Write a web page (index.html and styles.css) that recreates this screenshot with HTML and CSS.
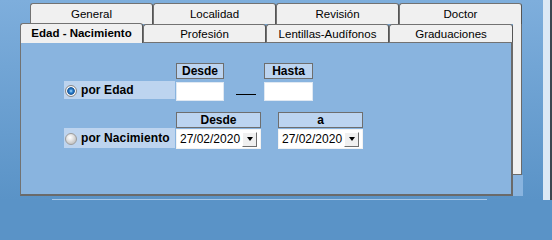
FILE: index.html
```html
<!DOCTYPE html>
<html>
<head>
<meta charset="utf-8">
<link rel="stylesheet" href="styles.css">
</head>
<body>
<div class="screen">
  <div class="ctl">
    <div class="row-back">
      <div class="tab back">General</div>
      <div class="tab back">Localidad</div>
      <div class="tab back">Revisión</div>
      <div class="tab back last">Doctor</div>
    </div>
    <div class="ctl-body">
      <div class="main">
        <div class="row-front">
          <div class="tab front sel">Edad - Nacimiento</div>
          <div class="tab front">Profesión</div>
          <div class="tab front">Lentillas-Audífonos</div>
          <div class="tab front last">Graduaciones</div>
        </div>
        <div class="panel">
          <div class="sec">
            <div class="heads">
              <div class="head w48">Desde</div>
              <div class="head w49 gap40">Hasta</div>
            </div>
            <div class="fields">
              <div class="opt h18"><span class="radio on"></span><span class="opt-text">por Edad</span></div>
              <div class="input w48"></div>
              <div class="dash"></div>
              <div class="input w49"></div>
            </div>
          </div>
          <div class="sec sec2">
            <div class="heads">
              <div class="head w85">Desde</div>
              <div class="head w85 gap17">a</div>
            </div>
            <div class="fields">
              <div class="opt h20"><span class="radio"></span><span class="opt-text">por Nacimiento</span></div>
              <div class="combo"><span class="combo-text">27/02/2020</span><span class="drop"><span class="tri"></span></span></div>
              <div class="combo gap17"><span class="combo-text">27/02/2020</span><span class="drop"><span class="tri"></span></span></div>
            </div>
          </div>
        </div>
      </div>
      <div class="edge">
        <div class="edge-gray"></div>
        <div class="edge-blue"></div>
      </div>
    </div>
    <div class="footbar"></div>
  </div>
  <div class="winedge"></div>
  <div class="winline"></div>
</div>
</body>
</html>
```
FILE: styles.css
```css
html {
  background: #5a93c7;
}
html, body {
  margin: 0;
  padding: 0;
}
body {
  width: 552px;
  height: 200px;
  overflow: hidden;
  font-family: "Liberation Sans", Arial, sans-serif;
  color: #000;
}
.screen {
  display: flex;
  width: 552px;
  height: 200px;
  background: linear-gradient(#7eaedc, #5a93c7);
}
.ctl {
  margin-left: 20px;
  width: 503px;
  padding-top: 3px;
  display: flex;
  flex-direction: column;
}
.row-back {
  display: flex;
  margin-left: 10px;
}
.tab {
  box-sizing: border-box;
  width: 123px;
  background: #f0f0f0;
  border: 1px solid #727272;
  border-right-color: #555;
  border-bottom: none;
  border-radius: 3px 3px 0 0;
  font-size: 11.5px;
  display: flex;
  align-items: center;
  justify-content: center;
  white-space: nowrap;
}
.back {
  height: 21px;
  padding-bottom: 1px;
}
.ctl-body {
  display: flex;
}
.main {
  width: 493px;
  display: flex;
  flex-direction: column;
}
.row-front {
  display: flex;
  align-items: flex-start;
}
.front {
  height: 19px;
  border-bottom: 1px solid #727272;
}
.front.last {
  width: 124px;
}
.front.sel {
  margin-top: -1px;
  height: 20px;
  border-bottom: none;
  font-weight: bold;
  font-size: 11.5px;
  padding-bottom: 1px;
}
.panel {
  box-sizing: border-box;
  height: 153px;
  background: #89b4df;
  border-left: 1px solid #727272;
  border-right: 2px solid #6a6a6a;
  border-bottom: 2px solid #6a6a6a;
  padding: 20px 0 0 43px;
}
.heads {
  display: flex;
  margin-left: 112px;
}
.head {
  box-sizing: border-box;
  height: 16px;
  border: 1px solid #6e6e6e;
  background: #bcd4f0;
  font-size: 12px;
  font-weight: bold;
  line-height: 14px;
  text-align: center;
}
.w48 { width: 48px; }
.w49 { width: 49px; }
.w85 { width: 85px; }
.gap40 { margin-left: 40px; }
.gap17 { margin-left: 17px; }
.fields {
  display: flex;
  align-items: flex-start;
  margin-top: 2px;
}
.sec2 {
  margin-top: 11px;
}
.sec2 .fields {
  margin-top: 0;
}
.opt {
  box-sizing: border-box;
  width: 111px;
  background: #bdd4ef;
  display: flex;
  align-items: center;
  padding-left: 1px;
}
.h18 { height: 18px; }
.h20 { height: 20px; }
.radio {
  box-sizing: border-box;
  width: 12px;
  height: 12px;
  border-radius: 50%;
  border: 1px solid #9c9c9c;
  background: radial-gradient(circle at 40% 35%, #ffffff 0, #e6e6e6 3px, #c9c9c9 6px);
  margin-top: 1px;
}
.radio.on {
  border-color: #8a8a8a;
  background: radial-gradient(circle at 50% 50%, #b4e2ff 0, #3b8fd8 1.5px, #0d4e96 3.4px, #ffffff 4.2px, #f2f2f2 4.8px, #d0d0d0 6px);
}
.opt-text {
  margin-left: 4px;
  font-size: 12px;
  font-weight: bold;
  white-space: nowrap;
  letter-spacing: 0.1px;
}
.input {
  box-sizing: border-box;
  height: 19px;
  margin-top: 1px;
  margin-left: 1px;
  background: #fff;
  border: 1px solid #dfe8f2;
}
.input.w49 {
  margin-left: 0;
}
.dash {
  width: 20px;
  height: 1px;
  background: #000;
  margin: 13px 8px 0 12px;
}
.combo {
  box-sizing: border-box;
  width: 85px;
  height: 20px;
  margin-top: 1px;
  margin-left: 1px;
  background: #fff;
  border: 1px solid #f2f2f2;
  display: flex;
  align-items: center;
  padding: 0 3px 0 3px;
}
.combo.gap17 {
  margin-left: 17px;
}
.combo-text {
  font-size: 12px;
  white-space: nowrap;
}
.drop {
  box-sizing: border-box;
  margin-left: auto;
  width: 15px;
  height: 15px;
  background: #f0f0f0;
  border: 1px solid;
  border-color: #fff #6e6e6e #6e6e6e #fff;
  display: flex;
  align-items: center;
  justify-content: center;
}
.tri {
  width: 0;
  height: 0;
  border-left: 3.5px solid transparent;
  border-right: 3.5px solid transparent;
  border-top: 4px solid #000;
}
.edge {
  width: 10px;
  display: flex;
  flex-direction: column;
}
.edge-gray {
  box-sizing: border-box;
  width: 9px;
  height: 151px;
  background: #f0f0f0;
  border-right: 1px solid #6a6a6a;
  border-bottom: 1px solid #6a6a6a;
}
.edge-blue {
  width: 10px;
  height: 21px;
  background: #89b4df;
}
.footbar {
  margin-top: 3px;
  margin-left: 32px;
  width: 435px;
  height: 1px;
  background: #a8c7e7;
}
.winedge {
  margin-left: 20px;
  width: 7px;
  height: 200px;
  background: #dde9f5;
}
.winline {
  width: 2px;
  height: 200px;
  background: #3c4650;
}
```
